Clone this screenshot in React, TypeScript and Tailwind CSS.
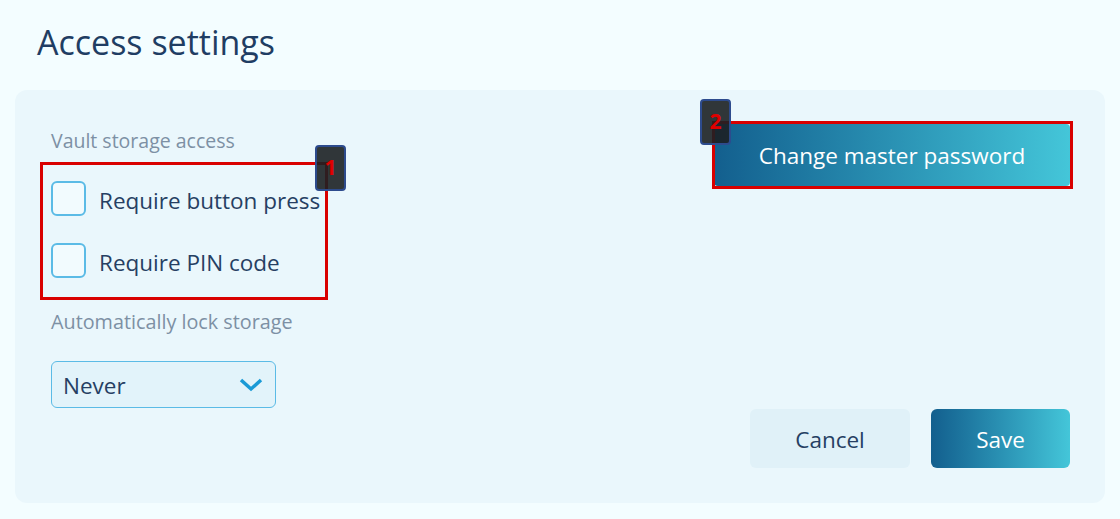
import { useState } from "react";

const font = { fontFamily: '"Open Sans", "Noto Sans", sans-serif' };

function Checkbox({ label }: { label: string }) {
  const [checked, setChecked] = useState(false);
  return (
    <label className="flex items-center gap-[13px] h-[35px] cursor-pointer">
      <span
        onClick={() => setChecked(!checked)}
        className="w-[35px] h-[35px] rounded-[6px] border-2 border-[#5bbbe6] bg-[#f2fbfe] shrink-0"
      />
      <span className="text-[22.5px] text-[#263f63] leading-[30px] pt-[5px]">{label}</span>
    </label>
  );
}

function Badge({ n, className }: { n: number; className: string }) {
  return (
    <div
      className={
        "absolute w-[31px] h-[46px] rounded-[4px] border-2 border-[#2d4b8d] bg-[#1c2024]/90 flex items-center justify-center text-[21px] font-bold text-[#e00000] " +
        className
      }
    >
      {n}
    </div>
  );
}

export default function App() {
  return (
    <div className="relative min-h-[519px] bg-[#f3fdff] pt-[18px] pb-[16px]" style={font}>
      <h1 className="ml-[37px] text-[34px] leading-[48px] text-[#1f3d63]">Access settings</h1>

      <div className="mt-[24px] mx-[15px] rounded-[12px] bg-[#eaf7fc] flex justify-between pt-[34px] pb-[35px] pl-[36px] pr-[35px] h-[413px]">
        <div className="flex flex-col pt-[5px]">
          <div className="text-[19.5px] leading-[24px] text-[#7d90a4]">Vault storage access</div>
          <div className="mt-[28px] flex flex-col gap-[27px]">
            <Checkbox label="Require button press" />
            <Checkbox label="Require PIN code" />
          </div>
          <div className="mt-[32px] text-[19.8px] leading-[24px] text-[#7d90a4]">
            Automatically lock storage
          </div>
          <button className="mt-[27px] w-[225px] h-[47px] rounded-[6px] border border-[#5bbbe6] bg-[#e2f3fa] flex items-center justify-between pl-[11px] pr-[11px]">
            <span className="text-[22.5px] text-[#263f63] pt-[3px]">Never</span>
            <svg width="26" height="18" viewBox="0 0 26 18" fill="none">
              <path d="M3 4 L13 13 L23 4" stroke="#1a9ad6" strokeWidth="3.5" />
            </svg>
          </button>
        </div>

        <div className="flex flex-col justify-between items-end">
          <button className="w-[356px] h-[62px] rounded-[4px] bg-gradient-to-r from-[#135f8e] to-[#44c6d9] text-white text-[22.5px] pt-[2px]">
            Change master password
          </button>
          <div className="flex gap-[21px]">
            <button className="w-[160px] h-[59px] rounded-[6px] bg-[#e0f1f8] text-[22.5px] text-[#263f63] pt-[2px]">
              Cancel
            </button>
            <button className="w-[139px] h-[59px] rounded-[6px] bg-gradient-to-r from-[#135f8e] to-[#44c6d9] text-[22.5px] text-white pt-[2px]">
              Save
            </button>
          </div>
        </div>
      </div>

      {/* annotation overlays */}
      <div className="absolute left-[40px] top-[162px] w-[288px] h-[138px] border-[3px] border-[#d90000]" />
      <Badge n={1} className="left-[315px] top-[145px]" />
      <div className="absolute left-[712px] top-[121px] w-[361px] h-[68px] border-[3px] border-[#d90000]" />
      <Badge n={2} className="left-[700px] top-[99px]" />
    </div>
  );
}
